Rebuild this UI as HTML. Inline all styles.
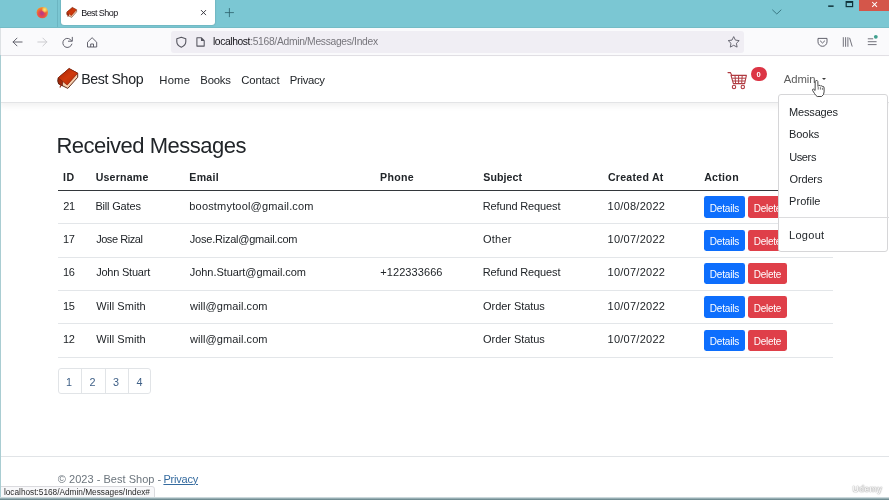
<!DOCTYPE html>
<html lang="en"><head><meta charset="utf-8"><title>Best Shop</title>
<style>
html,body{margin:0;padding:0}
body{width:889px;height:500px;overflow:hidden;position:relative;background:#fff;font-family:"Liberation Sans",sans-serif}
.t{position:absolute;white-space:pre;margin:0;padding:0}
#wrap{position:absolute;left:0;top:0;width:889px;height:500px;will-change:transform}
#tabbar{position:absolute;left:0;top:0;width:889px;height:27.5px;background:#7bc7d3;box-sizing:border-box;border-bottom:1px solid #74bcc6}
#tab{position:absolute;left:61px;top:-3px;width:154px;height:28px;background:#fff;border-radius:3px;box-shadow:0 0 1.5px rgba(0,0,0,.35)}
#tabsep{position:absolute;left:57px;top:0;width:1px;height:27px;background:rgba(0,60,70,.12)}
#toolbar{position:absolute;left:0;top:27.6px;width:889px;height:27px;background:#fafafc;border-bottom:0.8px solid #e2e0e5}
#urlbar{position:absolute;left:171px;top:30.8px;width:573px;height:22.4px;background:#f0eef4;border-radius:3px}
#closebtn{position:absolute;left:858.5px;top:0;width:31px;height:10.6px;background:#d4564a}
#chromeicons{position:absolute;left:0;top:0}
#navbar{position:absolute;left:0;top:57px;width:889px;height:44.7px;background:#fff;border-bottom:1px solid #e3e4e6;box-shadow:0 3px 6px rgba(0,0,0,.06)}
#badge{position:absolute;left:751px;top:67.4px;width:16px;height:13.8px;border-radius:7px;background:#dc3545}
#caret{position:absolute;left:821.9px;top:78.1px;width:0;height:0;border-left:2.7px solid transparent;border-right:2.7px solid transparent;border-top:2.9px solid #3a3a3a}
.hl{position:absolute;left:57.5px;width:775px}
.btn{position:absolute;height:21.4px;border-radius:2.4px}
.bp{background:#0d6efd}
.bd{background:#df3f49}
#pag{position:absolute;left:57.6px;top:368.4px;width:93.4px;height:25.8px;border:0.8px solid #e1e4e7;border-radius:3px;box-sizing:border-box}
#pag i{position:absolute;top:0;width:0.8px;height:100%;background:#e1e4e7}
#footline{position:absolute;left:0;top:455.9px;width:889px;height:0.8px;background:#e1e4e7}
#dd{position:absolute;left:777.7px;top:94.3px;width:110.7px;height:157.4px;background:#fff;border:0.8px solid #d6d6d8;border-radius:3px;box-sizing:border-box}
#dddiv{position:absolute;left:779px;top:217.3px;width:110px;height:0.8px;background:#dcdcde}
#status{position:absolute;left:-1px;top:485.8px;width:155.6px;height:14.4px;background:#f8f8fa;border:0.8px solid #dadade;border-radius:0 3px 0 0;box-sizing:border-box}
#leftedge{position:absolute;left:0;top:28px;width:1px;height:472px;background:linear-gradient(#dde1e4 0,#dde1e4 27px,#a9cdd2 27px)}
#botedge{position:absolute;left:0;top:497.4px;width:889px;height:2.6px;background:linear-gradient(#e6eef0,#9db3b8 45%,#5d7c82)}
</style></head>
<body>
<div id="wrap">
<div id="tabbar"></div>
<div id="tab"></div>
<div id="toolbar"></div>
<div id="urlbar"></div>
<div id="tabsep"></div>
<div id="closebtn"></div>
<span class="t " style="left:81.26px;top:5.68px;font-size:9.0px;line-height:14px;letter-spacing:-0.577px;color:#15141a;">Best Shop</span>
<span class="t " style="left:212.91px;top:34.13px;font-size:10.3px;line-height:16px;letter-spacing:-0.385px;color:#15141a;">localhost</span>
<span class="t " style="left:250.16px;top:34.13px;font-size:10.3px;line-height:16px;letter-spacing:-0.310px;color:#77767c;">:5168/Admin/Messages/Index</span>
<svg id="chromeicons" width="889" height="57" viewBox="0 0 889 57">
<defs>
<radialGradient id="ffg" cx="0.47" cy="0.62" r="0.62"><stop offset="0" stop-color="#c43a78"/><stop offset="0.5" stop-color="#e8504a"/><stop offset="0.85" stop-color="#f28a2c"/><stop offset="1" stop-color="#f3a03a"/></radialGradient>
<radialGradient id="ffy" cx="0.5" cy="0.5" r="0.5"><stop offset="0" stop-color="#fbe97f"/><stop offset="0.5" stop-color="#fbd75f" stop-opacity="0.8"/><stop offset="1" stop-color="#f8b040" stop-opacity="0"/></radialGradient>
<radialGradient id="ffp" cx="0.5" cy="0.5" r="0.5"><stop offset="0" stop-color="#b13c8e"/><stop offset="0.6" stop-color="#c63c76" stop-opacity="0.9"/><stop offset="1" stop-color="#d8406a" stop-opacity="0"/></radialGradient>
<linearGradient id="bk" x1="0" y1="0" x2="1" y2="1"><stop offset="0" stop-color="#a82406"/><stop offset="0.5" stop-color="#cf3a0c"/><stop offset="1" stop-color="#b32a08"/></linearGradient>
</defs>
<!-- firefox -->
<circle cx="42.3" cy="12.6" r="5.7" fill="url(#ffg)"/>
<circle cx="44.6" cy="9.8" r="3.4" fill="url(#ffy)"/>
<circle cx="41.9" cy="13.2" r="2.6" fill="url(#ffp)"/>
<!-- tab book icon -->
<g transform="translate(66.5,7.2) scale(0.5)">
<g transform="translate(-2.5,-3)"><path d="M14.1 3.6 L22.7 8.2 L22.7 12.3 L12.8 23.4 L3.6 18.8 Q2.3 15.8 3.3 12.8 Z" fill="#f6cfae" stroke="#4e1a0a" stroke-width="1" stroke-linejoin="round"/>
<path d="M3.3 12.8 L7.6 15.8 L7.4 20.7 L3.6 18.8 Q2.3 15.8 3.3 12.8 Z" fill="#a3290a"/>
<path d="M14.1 3.6 L22.7 8.2 L12.2 20 L3.3 12.8 Z" fill="url(#bk)" stroke="#8a2006" stroke-width="0.8" stroke-linejoin="round"/>
<path d="M7.4 17.2 L4.9 22.6" stroke="#9a2a12" stroke-width="1.3" fill="none"/></g>
</g>
<!-- tab close x -->
<path d="M201 10.1 l5 5 M206 10.1 l-5 5" stroke="#2b2a33" stroke-width="0.9" fill="none"/>
<!-- new tab plus -->
<path d="M224.9 12.6 h9 M229.4 8.1 v9" stroke="#2f6670" stroke-width="0.85" fill="none"/>
<!-- back -->
<path d="M13.1 42 h9 M17 38.1 l-3.9 3.9 l3.9 3.9" stroke="#5b5b66" stroke-width="0.95" fill="none" stroke-linecap="round" stroke-linejoin="round"/>
<!-- forward (disabled) -->
<path d="M37.8 42 h9 M42.9 38.1 l3.9 3.9 l-3.9 3.9" stroke="#c9c9ce" stroke-width="0.95" fill="none" stroke-linecap="round" stroke-linejoin="round"/>
<!-- reload -->
<path d="M71.6 40.9 a4.6 4.6 0 1 0 0.3 3.2" stroke="#5b5b66" stroke-width="0.95" fill="none" stroke-linecap="round"/>
<path d="M72.3 37.3 v3.9 h-3.9" stroke="#5b5b66" stroke-width="0.95" fill="none" stroke-linecap="round" stroke-linejoin="round"/>
<!-- home -->
<path d="M87.5 42.2 l4.6 -4.5 l4.6 4.5 v4.8 h-9.2z M90.7 47 v-3 h2.8 v3" stroke="#5b5b66" stroke-width="0.95" fill="none" stroke-linejoin="round"/>
<!-- shield -->
<path d="M181.3 37.3 l4.5 1.5 v3 q0 3.6 -4.5 5.4 q-4.5 -1.8 -4.5 -5.4 v-3z" stroke="#55555f" stroke-width="1.1" fill="none" stroke-linejoin="round"/>
<!-- doc -->
<path d="M196.9 37.8 h4.6 l2.7 2.7 v5.6 h-7.3z M201.5 37.8 v2.7 h2.7" stroke="#55555f" stroke-width="1.05" fill="none" stroke-linejoin="round"/>
<!-- star -->
<path d="M733.7 36.6 l1.7 3.5 l3.8 0.5 l-2.8 2.7 l0.7 3.8 l-3.4 -1.8 l-3.4 1.8 l0.7 -3.8 l-2.8 -2.7 l3.8 -0.5z" stroke="#5b5b66" stroke-width="0.9" fill="none" stroke-linejoin="round"/>
<!-- pocket -->
<path d="M818 38.4 h9 v3.4 a4.5 4.5 0 0 1 -9 0z" stroke="#5b5b66" stroke-width="0.95" fill="none" stroke-linejoin="round"/>
<path d="M820.4 41 l2.1 2 l2.1 -2" stroke="#5b5b66" stroke-width="0.95" fill="none" stroke-linecap="round" stroke-linejoin="round"/>
<!-- library -->
<path d="M843.3 37.6 v8.8 M845.6 37.6 v8.8 M847.9 37.6 v8.8 M849.7 38.2 l2.4 8" stroke="#5b5b66" stroke-width="0.85" fill="none" stroke-linecap="round"/>
<!-- menu -->
<path d="M868.2 38.8 h4.6 M868.2 41.7 h8 M868.2 44.6 h8" stroke="#5b5b66" stroke-width="0.85" fill="none" stroke-linecap="round"/>
<circle cx="875.8" cy="36.8" r="1.9" fill="#3fa08f"/>
<!-- tabs chevron -->
<path d="M772.6 10 l4.2 4 l4.2 -4" stroke="#377480" stroke-width="0.95" fill="none" stroke-linecap="round" stroke-linejoin="round"/>
<!-- minimize -->
<rect x="828.2" y="5.4" width="5.4" height="1.5" fill="#10333a"/>
<!-- maximize -->
<rect x="846.2" y="1.6" width="6.4" height="5" fill="none" stroke="#10333a" stroke-width="1.2"/>
<rect x="846.2" y="1.3" width="6.4" height="1.6" fill="#10333a"/>
<!-- close x -->
<path d="M872.2 2 l4.8 4.8 M877 2 l-4.8 4.8" stroke="#fff" stroke-width="1.05" fill="none"/>
</svg>
<div id="navbar"></div>
<svg id="brandicon" width="26" height="26" viewBox="0 0 26 26" style="position:absolute;left:55px;top:65px">
<path d="M14.1 3.6 L22.7 8.2 L22.7 12.3 L12.8 23.4 L3.6 18.8 Q2.3 15.8 3.3 12.8 Z" fill="#f6cfae" stroke="#4e1a0a" stroke-width="0.9" stroke-linejoin="round"/>
<path d="M3.3 12.8 L7.6 15.8 L7.4 20.7 L3.6 18.8 Q2.3 15.8 3.3 12.8 Z" fill="#a3290a" stroke="#4e1a0a" stroke-width="0.6" stroke-linejoin="round"/>
<path d="M14.1 3.6 L22.7 8.2 L12.2 20 L3.3 12.8 Z" fill="url(#bk)" stroke="#8a2006" stroke-width="0.7" stroke-linejoin="round"/>
<path d="M7.4 17.2 L4.9 22.6" stroke="#9a2a12" stroke-width="1.1" fill="none"/>
</svg>
<span class="t " style="left:81.14px;top:68.08px;font-size:14.2px;line-height:23px;letter-spacing:-0.383px;color:#212529;">Best Shop</span>
<span class="t " style="left:159.37px;top:70.88px;font-size:11.3px;line-height:18px;letter-spacing:0.162px;color:#212529;">Home</span>
<span class="t " style="left:200.37px;top:70.88px;font-size:11.3px;line-height:18px;letter-spacing:-0.218px;color:#212529;">Books</span>
<span class="t " style="left:241.23px;top:70.88px;font-size:11.3px;line-height:18px;letter-spacing:-0.098px;color:#212529;">Contact</span>
<span class="t " style="left:289.87px;top:70.88px;font-size:11.3px;line-height:18px;letter-spacing:-0.316px;color:#212529;">Privacy</span>
<svg id="cart" width="24" height="22" viewBox="0 0 24 22" style="position:absolute;left:726px;top:70px">
<path d="M2 2.6 h2.4 l1.4 3 M5 5.4 h15.4 l-1.8 8.2 h-11.2z" stroke="#b03a40" stroke-width="1.1" fill="none" stroke-linejoin="round" stroke-linecap="round"/>
<path d="M6.2 8.2 h13.4 M6.8 11 h12.2 M9 5.6 l0.6 7.8 M12.6 5.6 v7.8 M16.2 5.6 l-0.5 7.8" stroke="#b03a40" stroke-width="1" fill="none"/>
<circle cx="8" cy="17" r="1.7" stroke="#b03a40" stroke-width="1.1" fill="none"/>
<circle cx="16.8" cy="17" r="1.7" stroke="#b03a40" stroke-width="1.1" fill="none"/>
</svg>
<div id="badge"></div>
<span class="t " style="left:756.60px;top:68.67px;font-size:7.6px;line-height:12px;letter-spacing:0.000px;color:#fff;font-weight:700;">0</span>
<span class="t " style="left:783.68px;top:70.28px;font-size:11.3px;line-height:18px;letter-spacing:-0.043px;color:#5c5c5c;">Admin</span>
<div id="caret"></div>
<span class="t " style="left:56.40px;top:128.18px;font-size:22.0px;line-height:35px;letter-spacing:-0.506px;color:#212529;">Received Messages</span>
<span class="t " style="left:63.09px;top:169.13px;font-size:10.6px;line-height:17px;letter-spacing:0.554px;color:#212529;font-weight:700;">ID</span>
<span class="t " style="left:95.66px;top:169.13px;font-size:10.6px;line-height:17px;letter-spacing:0.205px;color:#212529;font-weight:700;">Username</span>
<span class="t " style="left:189.29px;top:169.13px;font-size:10.6px;line-height:17px;letter-spacing:0.295px;color:#212529;font-weight:700;">Email</span>
<span class="t " style="left:380.09px;top:169.13px;font-size:10.6px;line-height:17px;letter-spacing:0.270px;color:#212529;font-weight:700;">Phone</span>
<span class="t " style="left:483.29px;top:169.13px;font-size:10.6px;line-height:17px;letter-spacing:0.092px;color:#212529;font-weight:700;">Subject</span>
<span class="t " style="left:607.97px;top:169.13px;font-size:10.6px;line-height:17px;letter-spacing:0.240px;color:#212529;font-weight:700;">Created At</span>
<span class="t " style="left:704.14px;top:169.13px;font-size:10.6px;line-height:17px;letter-spacing:0.309px;color:#212529;font-weight:700;">Action</span>
<div class="hl" style="top:190.1px;height:1.4px;background:#33373b"></div>
<span class="t " style="left:63.25px;top:196.69px;font-size:11.0px;line-height:18px;letter-spacing:0.000px;color:#212529;letter-spacing:-0.3px;">21</span>
<span class="t " style="left:95.40px;top:196.69px;font-size:11.0px;line-height:18px;letter-spacing:-0.175px;color:#212529;">Bill Gates</span>
<span class="t " style="left:189.29px;top:196.69px;font-size:11.0px;line-height:18px;letter-spacing:0.182px;color:#212529;">boostmytool@gmail.com</span>
<span class="t " style="left:482.70px;top:196.69px;font-size:11.0px;line-height:18px;letter-spacing:-0.132px;color:#212529;">Refund Request</span>
<span class="t " style="left:607.56px;top:196.69px;font-size:11.0px;line-height:18px;letter-spacing:0.260px;color:#212529;">10/08/2022</span>
<div class="btn bp" style="top:196.30px;left:704px;width:41.2px"></div>
<div class="btn bd" style="top:196.30px;left:748px;width:39.2px"></div>
<span class="t " style="left:709.78px;top:200.53px;font-size:10.0px;line-height:16px;letter-spacing:-0.164px;color:#fff;">Details</span>
<span class="t " style="left:753.78px;top:200.53px;font-size:10.0px;line-height:16px;letter-spacing:-0.248px;color:#fff;">Delete</span>
<div class="hl" style="top:223.20px;height:0.8px;background:#e3e6e9"></div>
<span class="t " style="left:62.96px;top:230.04px;font-size:11.0px;line-height:18px;letter-spacing:0.000px;color:#212529;letter-spacing:-0.3px;">17</span>
<span class="t " style="left:96.13px;top:230.04px;font-size:11.0px;line-height:18px;letter-spacing:-0.437px;color:#212529;">Jose Rizal</span>
<span class="t " style="left:189.83px;top:230.04px;font-size:11.0px;line-height:18px;letter-spacing:-0.228px;color:#212529;">Jose.Rizal@gmail.com</span>
<span class="t " style="left:483.08px;top:230.04px;font-size:11.0px;line-height:18px;letter-spacing:0.198px;color:#212529;">Other</span>
<span class="t " style="left:607.56px;top:230.04px;font-size:11.0px;line-height:18px;letter-spacing:0.260px;color:#212529;">10/07/2022</span>
<div class="btn bp" style="top:229.65px;left:704px;width:41.2px"></div>
<div class="btn bd" style="top:229.65px;left:748px;width:39.2px"></div>
<span class="t " style="left:709.78px;top:233.88px;font-size:10.0px;line-height:16px;letter-spacing:-0.164px;color:#fff;">Details</span>
<span class="t " style="left:753.78px;top:233.88px;font-size:10.0px;line-height:16px;letter-spacing:-0.248px;color:#fff;">Delete</span>
<div class="hl" style="top:256.55px;height:0.8px;background:#e3e6e9"></div>
<span class="t " style="left:62.96px;top:263.39px;font-size:11.0px;line-height:18px;letter-spacing:0.000px;color:#212529;letter-spacing:-0.3px;">16</span>
<span class="t " style="left:96.13px;top:263.39px;font-size:11.0px;line-height:18px;letter-spacing:-0.220px;color:#212529;">John Stuart</span>
<span class="t " style="left:189.83px;top:263.39px;font-size:11.0px;line-height:18px;letter-spacing:-0.072px;color:#212529;">John.Stuart@gmail.com</span>
<span class="t " style="left:380.26px;top:263.39px;font-size:11.0px;line-height:18px;letter-spacing:0.082px;color:#212529;">+122333666</span>
<span class="t " style="left:482.70px;top:263.39px;font-size:11.0px;line-height:18px;letter-spacing:-0.132px;color:#212529;">Refund Request</span>
<span class="t " style="left:607.56px;top:263.39px;font-size:11.0px;line-height:18px;letter-spacing:0.260px;color:#212529;">10/07/2022</span>
<div class="btn bp" style="top:263.00px;left:704px;width:41.2px"></div>
<div class="btn bd" style="top:263.00px;left:748px;width:39.2px"></div>
<span class="t " style="left:709.78px;top:267.24px;font-size:10.0px;line-height:16px;letter-spacing:-0.164px;color:#fff;">Details</span>
<span class="t " style="left:753.78px;top:267.24px;font-size:10.0px;line-height:16px;letter-spacing:-0.248px;color:#fff;">Delete</span>
<div class="hl" style="top:289.90px;height:0.8px;background:#e3e6e9"></div>
<span class="t " style="left:62.96px;top:296.74px;font-size:11.0px;line-height:18px;letter-spacing:0.000px;color:#212529;letter-spacing:-0.3px;">15</span>
<span class="t " style="left:96.25px;top:296.74px;font-size:11.0px;line-height:18px;letter-spacing:0.064px;color:#212529;">Will Smith</span>
<span class="t " style="left:190.02px;top:296.74px;font-size:11.0px;line-height:18px;letter-spacing:0.073px;color:#212529;">will@gmail.com</span>
<span class="t " style="left:483.08px;top:296.74px;font-size:11.0px;line-height:18px;letter-spacing:-0.058px;color:#212529;">Order Status</span>
<span class="t " style="left:607.56px;top:296.74px;font-size:11.0px;line-height:18px;letter-spacing:0.260px;color:#212529;">10/07/2022</span>
<div class="btn bp" style="top:296.35px;left:704px;width:41.2px"></div>
<div class="btn bd" style="top:296.35px;left:748px;width:39.2px"></div>
<span class="t " style="left:709.78px;top:300.59px;font-size:10.0px;line-height:16px;letter-spacing:-0.164px;color:#fff;">Details</span>
<span class="t " style="left:753.78px;top:300.59px;font-size:10.0px;line-height:16px;letter-spacing:-0.248px;color:#fff;">Delete</span>
<div class="hl" style="top:323.25px;height:0.8px;background:#e3e6e9"></div>
<span class="t " style="left:62.96px;top:330.09px;font-size:11.0px;line-height:18px;letter-spacing:0.000px;color:#212529;letter-spacing:-0.3px;">12</span>
<span class="t " style="left:96.25px;top:330.09px;font-size:11.0px;line-height:18px;letter-spacing:0.064px;color:#212529;">Will Smith</span>
<span class="t " style="left:190.02px;top:330.09px;font-size:11.0px;line-height:18px;letter-spacing:0.073px;color:#212529;">will@gmail.com</span>
<span class="t " style="left:483.08px;top:330.09px;font-size:11.0px;line-height:18px;letter-spacing:-0.058px;color:#212529;">Order Status</span>
<span class="t " style="left:607.56px;top:330.09px;font-size:11.0px;line-height:18px;letter-spacing:0.260px;color:#212529;">10/07/2022</span>
<div class="btn bp" style="top:329.70px;left:704px;width:41.2px"></div>
<div class="btn bd" style="top:329.70px;left:748px;width:39.2px"></div>
<span class="t " style="left:709.78px;top:333.94px;font-size:10.0px;line-height:16px;letter-spacing:-0.164px;color:#fff;">Details</span>
<span class="t " style="left:753.78px;top:333.94px;font-size:10.0px;line-height:16px;letter-spacing:-0.248px;color:#fff;">Delete</span>
<div class="hl" style="top:356.60px;height:0.8px;background:#e3e6e9"></div>
<div id="pag"><i style="left:22.6px"></i><i style="left:46.3px"></i><i style="left:69.4px"></i></div>
<span class="t " style="left:66.08px;top:374.46px;font-size:10.8px;line-height:17px;letter-spacing:0.000px;color:#3e5f86;">1</span>
<span class="t " style="left:89.46px;top:374.46px;font-size:10.8px;line-height:17px;letter-spacing:0.000px;color:#3e5f86;">2</span>
<span class="t " style="left:112.89px;top:374.46px;font-size:10.8px;line-height:17px;letter-spacing:0.000px;color:#3e5f86;">3</span>
<span class="t " style="left:136.45px;top:374.46px;font-size:10.8px;line-height:17px;letter-spacing:0.000px;color:#3e5f86;">4</span>
<div id="footline"></div>
<span class="t " style="left:57.83px;top:469.79px;font-size:11.0px;line-height:18px;letter-spacing:0.026px;color:#6c757d;white-space:pre;">© 2023 - Best Shop - </span>
<span class="t " style="left:163.40px;top:469.79px;font-size:11.0px;line-height:18px;letter-spacing:-0.206px;color:#356b9f;text-decoration:underline;text-underline-offset:1px;">Privacy</span>
<div id="dd"></div>
<span class="t " style="left:789.10px;top:103.09px;font-size:11.0px;line-height:18px;letter-spacing:-0.176px;color:#212529;">Messages</span>
<span class="t " style="left:789.10px;top:125.29px;font-size:11.0px;line-height:18px;letter-spacing:-0.093px;color:#212529;">Books</span>
<span class="t " style="left:789.15px;top:147.59px;font-size:11.0px;line-height:18px;letter-spacing:-0.370px;color:#212529;">Users</span>
<span class="t " style="left:789.48px;top:169.79px;font-size:11.0px;line-height:18px;letter-spacing:-0.140px;color:#212529;">Orders</span>
<span class="t " style="left:789.10px;top:192.09px;font-size:11.0px;line-height:18px;letter-spacing:0.035px;color:#212529;">Profile</span>
<div id="dddiv"></div>
<span class="t " style="left:789.10px;top:225.89px;font-size:11.0px;line-height:18px;letter-spacing:0.268px;color:#212529;">Logout</span>
<svg id="hand" width="16" height="19" viewBox="0 0 16 19" style="position:absolute;left:811px;top:79px">
<path d="M5.2 1.6 q1.2 -0.6 1.6 0.8 l0.2 5 l1 -1 q1 -0.2 1.4 0.6 l0.6 -0.3 q1 0 1.3 0.8 l0.6 -0.2 q1.2 0.2 1.2 1.6 v4 q0 3.2 -2.6 4.6 h-4.2 q-1.6 -0.8 -2.8 -3 l-2 -3.2 q-0.3 -1.2 1 -1.2 l1.6 1.4 l0.1 -9.2 q0.2 -0.6 1 -0.7z" fill="#fff" stroke="#333" stroke-width="0.9" stroke-linejoin="round"/>
<path d="M7.2 8 v2.6 M9.4 8.2 v2.4 M11.4 8.8 v2" stroke="#333" stroke-width="0.7" fill="none"/>
</svg>
<div id="status"></div>
<span class="t " style="left:3.94px;top:485.82px;font-size:8.3px;line-height:13px;letter-spacing:-0.018px;color:#2b2b2b;">localhost:5168/Admin/Messages/Index#</span>
<span class="t " style="left:852.48px;top:481.82px;font-size:8.6px;line-height:14px;letter-spacing:0.222px;color:#f4f4f4;font-weight:700;text-shadow:0 0 1.5px #9a9a9a,0 0 1px #aaa;">Udemy</span>
<div id="leftedge"></div><div id="botedge"></div>
</div>
</body></html>
